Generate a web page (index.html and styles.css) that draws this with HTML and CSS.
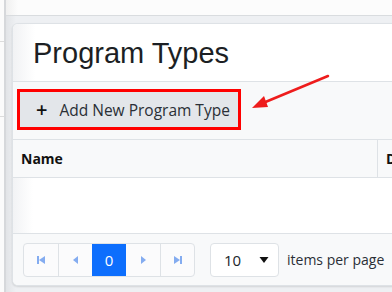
FILE: index.html
```html
<!DOCTYPE html>
<html lang="en">
<head>
  <meta charset="UTF-8" />
  <title>Program Types</title>
  <link rel="stylesheet" href="styles.css">
</head>
<body>
  <div class="shell">
    <aside class="side">
      <div class="side-row"></div>
      <div class="side-row tall"></div>
    </aside>

    <main class="main">
      <div class="topbar"></div>

      <div class="content">
        <section class="card">
          <div class="card-head">
            <h1>Program Types</h1>
          </div>

          <div class="toolbar">
            <div class="highlight">
              <button class="btn-add"><span class="plus">+</span>Add New Program Type</button>
            </div>
          </div>

          <div class="grid-head">
            <div class="col col-name">Name</div>
            <div class="col col-desc">D</div>
          </div>

          <div class="grid-body"></div>

          <div class="pager">
            <div class="pages">
              <span class="pg dim">
                <svg width="10" height="10" viewBox="0 0 10 10"><rect x="1" y="1" width="2" height="8" fill="currentColor"/><path d="M9 1 L3 5 L9 9 Z" fill="currentColor"/></svg>
              </span>
              <span class="pg dim">
                <svg width="10" height="10" viewBox="0 0 10 10"><path d="M7 1 L2 5 L7 9 Z" fill="currentColor"/></svg>
              </span>
              <span class="pg active">0</span>
              <span class="pg dim">
                <svg width="10" height="10" viewBox="0 0 10 10"><path d="M3 1 L8 5 L3 9 Z" fill="currentColor"/></svg>
              </span>
              <span class="pg dim">
                <svg width="10" height="10" viewBox="0 0 10 10"><path d="M1 1 L7 5 L1 9 Z" fill="currentColor"/><rect x="7" y="1" width="2" height="8" fill="currentColor"/></svg>
              </span>
            </div>
            <div class="size-select">
              <span>10</span>
              <svg width="10" height="8" viewBox="0 0 10 8"><path d="M0.5 1 L9.5 1 L5 7 Z" fill="#111"/></svg>
            </div>
            <span class="per-page">items per page</span>
          </div>
        </section>
      </div>
    </main>
  </div>

  <!-- annotation arrow drawn over the page -->
  <svg class="callout" width="392" height="292" viewBox="0 0 392 292">
    <line x1="328" y1="76" x2="263" y2="103" stroke="#ee1c1c" stroke-width="2.5" stroke-linecap="round"/>
    <path d="M252 108 L264 96 L268 107 Z" fill="#ee1c1c"/>
  </svg>
</body>
</html>
```

FILE: styles.css
```css
:root {
  --border: #dee2e6;
  --panel: #f8f9fa;
  --text: #212529;
  --blue: #0d6efd;
  --red: #ff0000;
}

* {
  margin: 0;
  padding: 0;
  box-sizing: border-box;
}

html, body {
  width: 392px;
  height: 292px;
  overflow: hidden;
}

body {
  font-family: 'Open Sans', 'Noto Sans', sans-serif;
  color: var(--text);
  background: #eceef1;
  position: relative;
}

.shell {
  display: flex;
  height: 100%;
}

.side {
  width: 6px;
  flex-shrink: 0;
  background: #fbfbfb;
  border-right: 2px solid #d6d8db;
}

.side-row {
  height: 42px;
  border-bottom: 1px solid #dcdcdc;
}

.side-row.tall {
  height: 75px;
}

.main {
  flex: 1;
  display: flex;
  flex-direction: column;
  background: linear-gradient(90deg, #e2e4e7, #eef0f3 10px);
  min-width: 0;
}

.topbar {
  height: 16px;
  flex-shrink: 0;
  background: linear-gradient(90deg, #f0f0f0, #fcfcfc 12px);
  border-bottom: 1px solid #d9dcdf;
}

.content {
  padding: 7px 0 0 6px;
}

.card {
  width: 440px;
  height: 263px;
  background: #fff;
  border: 1px solid var(--border);
  border-radius: 6px 0 0 6px;
  box-shadow: 0 1px 2px rgba(0, 0, 0, 0.12);
  overflow: hidden;
  display: flex;
  flex-direction: column;
}

.card-head {
  height: 58px;
  padding: 9px 0 0 20px;
  border-bottom: 1px solid var(--border);
  background: linear-gradient(90deg, #f1f2f4, #fff 22px);
}

.card-head h1 {
  font-family: 'Liberation Sans', Arial, sans-serif;
  font-weight: 400;
  font-size: 29px;
  line-height: 40px;
  color: #1c1f24;
}

.toolbar {
  height: 58px;
  padding: 7px 0 0 4px;
  background: var(--panel);
  border-bottom: 1px solid var(--border);
}

.highlight {
  display: inline-flex;
  border: 3px solid var(--red);
}

.btn-add {
  display: flex;
  align-items: center;
  height: 35px;
  width: 218px;
  padding: 0 0 0 16px;
  border: none;
  background: #e3e6ea;
  font-family: 'Open Sans', 'Noto Sans', sans-serif;
  font-size: 15.5px;
  color: #2a2f36;
}

.plus {
  font-size: 20px;
  font-weight: 600;
  margin-right: 12px;
  line-height: 1;
  color: #111;
}

.grid-head {
  display: flex;
  height: 38px;
  background: var(--panel);
  border-bottom: 1px solid var(--border);
}

.col {
  display: flex;
  align-items: center;
  font-size: 14px;
  font-weight: 700;
  color: #111;
  padding-left: 8px;
  white-space: nowrap;
  overflow: hidden;
}

.col-name {
  width: 365px;
  border-right: 1px solid var(--border);
}

.col-desc {
  flex: 1;
}

.grid-body {
  height: 56px;
  background: linear-gradient(90deg, #f2f3f5, #fff 20px);
  border-bottom: 1px solid var(--border);
}

.pager {
  flex: 1;
  display: flex;
  align-items: center;
  padding: 0 0 0 10px;
  background: var(--panel);
}

.pages {
  display: flex;
  height: 34px;
  border: 1px solid var(--border);
  border-radius: 4px;
  overflow: hidden;
  background: #fbfbfc;
}

.pg {
  width: 34px;
  display: flex;
  align-items: center;
  justify-content: center;
  border-left: 1px solid var(--border);
  font-size: 15px;
}

.pg:first-child {
  border-left: none;
}

.pg.dim {
  color: #84acf0;
}

.pg.active {
  background: var(--blue);
  color: #fff;
  border-left: none;
}

.pg.active + .pg {
  border-left: none;
}

.size-select {
  margin-left: 15px;
  width: 69px;
  height: 34px;
  display: flex;
  align-items: center;
  justify-content: space-between;
  padding: 0 9px 0 13px;
  background: #fff;
  border: 1px solid var(--border);
  border-radius: 4px;
  font-size: 15px;
}

.per-page {
  margin-left: 8px;
  font-size: 14px;
  color: #2a2f36;
}

.callout {
  position: absolute;
  left: 0;
  top: 0;
  pointer-events: none;
}
```
